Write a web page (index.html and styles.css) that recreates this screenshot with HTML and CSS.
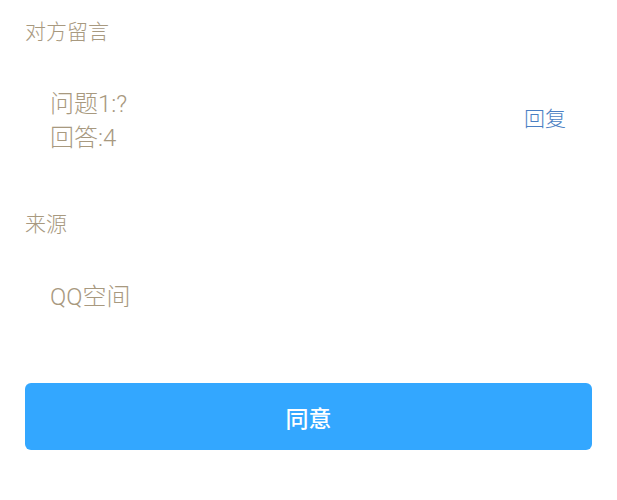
FILE: index.html
```html
<!DOCTYPE html>
<html lang="zh">
<head>
<meta charset="utf-8">
<link rel="stylesheet" href="styles.css">
</head>
<body>
<div class="page">
  <div class="label label-first">对方留言</div>
  <div class="row">
    <div class="lines">
      <div class="line">问题1:?</div>
      <div class="line">回答:4</div>
    </div>
    <div class="reply">回复</div>
  </div>
  <div class="label label-second">来源</div>
  <div class="value">QQ空间</div>
  <button class="agree">同意</button>
</div>
</body>
</html>
```
FILE: styles.css
```css
html, body {
  margin: 0;
  padding: 0;
  background: #ffffff;
}
.page {
  padding: 20px 25px 0 25px;
  font-family: "Roboto", "Noto Sans CJK SC", "Noto Sans", sans-serif;
  font-weight: 300;
  color: #a8997f;
}
.label {
  font-size: 21px;
  height: 25px;
  line-height: 25px;
}
.row {
  margin-top: 42px;
  display: flex;
  align-items: center;
  justify-content: space-between;
  padding: 0 26px 0 25px;
}
.line {
  font-size: 24px;
  line-height: 34px;
}
.reply {
  font-size: 21px;
  color: #4b7fc3;
  line-height: 22px;
  margin-bottom: 5px;
}
.label-second {
  margin-top: 57px;
}
.value {
  margin-top: 43px;
  padding-left: 25px;
  font-size: 24px;
  line-height: 34px;
}
.agree {
  display: block;
  margin-top: 69px;
  width: 100%;
  height: 67px;
  border: none;
  border-radius: 6px;
  background: #33a7ff;
  color: #ffffff;
  font-family: "Noto Sans CJK SC", "Noto Sans", sans-serif;
  font-size: 23px;
  font-weight: 500;
  padding: 0;
}
```
